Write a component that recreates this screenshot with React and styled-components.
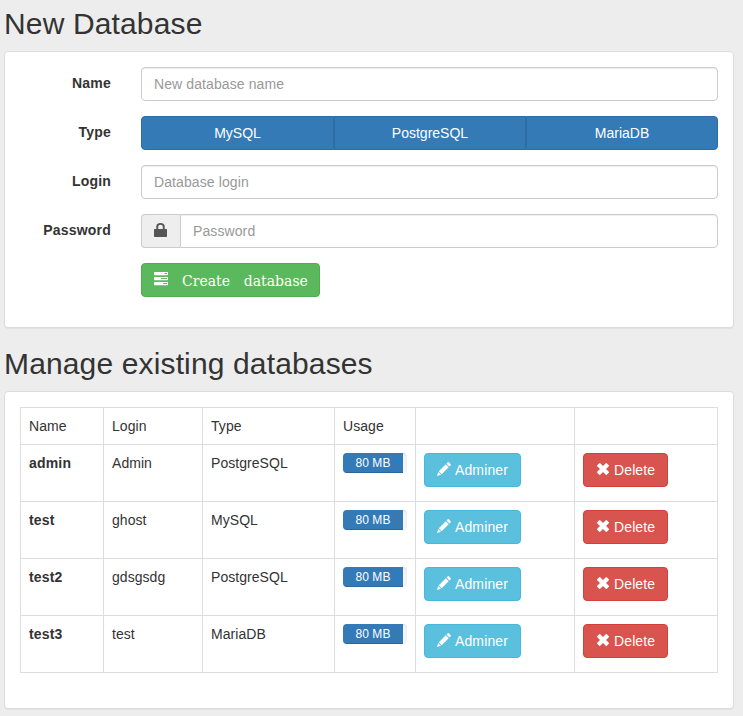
import React from "react";
import styled, { createGlobalStyle, css } from "styled-components";

const GlobalStyle = createGlobalStyle`
  *, *::before, *::after { box-sizing: border-box; }
  html { height: 100%; background: #ededed; }
  body {
    margin: 0;
    background: #ededed;
    color: #333;
    font: 14px/20px "Liberation Sans", Arial, sans-serif;
  }
`;

const Page = styled.main`
  width: 730px;
  margin-left: 4px;
  padding-top: 7px;
`;

const Section = styled.section`
  margin-bottom: 19px;
`;

const Heading = styled.h2`
  margin: 0 0 11px;
  font-size: 30px;
  line-height: 33px;
  font-weight: 400;
  letter-spacing: 0.14px;
`;

const Panel = styled.div`
  padding: 15px;
  background: #fff;
  border: 1px solid #ddd;
  border-radius: 4px;
  box-shadow: 0 1px 1px rgba(0, 0, 0, 0.05);
`;

const Form = styled.form`
  display: grid;
  gap: 15px;
  padding-bottom: 15px;
`;

const FormRow = styled.div`
  display: grid;
  grid-template-columns: 91px 577px;
  column-gap: 30px;
  height: 34px;
`;

const Label = styled.label`
  padding-top: 6px;
  font-weight: 700;
  text-align: right;
  letter-spacing: 0.2px;
`;

const InputGroup = styled.div`
  display: flex;
`;

const Input = styled.input`
  flex: 1;
  min-width: 0;
  height: 34px;
  padding: 6px 12px;
  color: #555;
  font: inherit;
  letter-spacing: 0.1px;
  background: #fff;
  border: 1px solid #ccc;
  border-radius: ${(p) => (p.$joined ? "0 4px 4px 0" : "4px")};
  box-shadow: inset 0 1px 1px rgba(0, 0, 0, 0.075);
  &::placeholder { color: #999; opacity: 1; }
`;

const Addon = styled.span`
  display: flex;
  justify-content: center;
  width: 39px;
  padding-top: 6px;
  color: #555;
  background: #eee;
  border: 1px solid #ccc;
  border-right: 0;
  border-radius: 4px 0 0 4px;
`;

const tones = {
  primary: css`background: #337ab7; border-color: #2e6da4;`,
  success: css`background: #5cb85c; border-color: #4cae4c;`,
  info: css`background: #5bc0de; border-color: #46b8da;`,
  danger: css`background: #d9534f; border-color: #d43f3a;`,
};

const Button = styled.button`
  display: inline-flex;
  align-items: flex-start;
  height: 34px;
  padding: 6px 12px;
  color: #fff;
  font: inherit;
  white-space: nowrap;
  border: 1px solid;
  border-radius: 4px;
  ${(p) => tones[p.$tone]}
`;

const TypeGroup = styled.div`
  display: grid;
  grid-template-columns: 193px 192px 192px;
`;

const TypeButton = styled(Button)`
  justify-content: center;
  border-radius: 0;
  &:first-child { border-radius: 4px 0 0 4px; }
  &:last-child { border-radius: 0 4px 4px 0; }
`;

const CreateButton = styled(Button)`
  grid-column: 2;
  justify-self: start;
  width: 179px;
`;

const CreateText = styled.span`
  margin: 1px 0 0 14px;
  font-family: "DejaVu Serif", serif;
  word-spacing: 9.4px;
`;

const AdminerButton = styled(Button)`
  width: 97px;
`;

const DeleteButton = styled(Button)`
  width: 85px;
`;

const ButtonText = styled.span`
  margin-left: 4px;
  letter-spacing: 0.12px;
`;

const Icon = styled.svg`
  flex: none;
  width: 14px;
  height: 14px;
  margin-top: 2px;
  fill: currentColor;
`;

const Table = styled.table`
  width: 698px;
  margin-bottom: 20px;
  table-layout: fixed;
  border-collapse: collapse;
  border: 1px solid #ddd;
`;

const Column = styled.col`
  width: ${(p) => p.$width}px;
`;

const Cell = styled.td`
  height: ${(p) => (p.$header ? 37 : 57)}px;
  padding: 8px;
  border: 1px solid #ddd;
  line-height: 20px;
  font-weight: ${(p) => (p.$strong ? 700 : 400)};
  letter-spacing: ${(p) => (p.$strong ? 0.18 : 0.05)}px;
  text-align: left;
  vertical-align: top;
`;

const CellContent = styled.div`
  height: 40px;
`;

const Progress = styled.div`
  height: 20px;
  overflow: hidden;
  background: #f5f5f5;
  border-radius: 4px;
  box-shadow: inset 0 1px 2px rgba(0, 0, 0, 0.1);
`;

const ProgressBar = styled.div`
  width: 60px;
  height: 100%;
  color: #fff;
  font-size: 12px;
  line-height: 20px;
  text-align: center;
  background: #337ab7;
  box-shadow: inset 0 -1px 0 rgba(0, 0, 0, 0.15);
`;

const LockIcon = () => (
  <Icon viewBox="0 0 14 14">
    <path fillRule="evenodd" d="M2.3 6V3.6Q2.3 0 6.5 0T10.7 3.6V6h1.6q.7 0 .7.7v6.6q0 .7-.7.7H.7q-.7 0-.7-.7V6.7Q0 6 .7 6zM4.2 6h4.6V3.8Q8.8 1.7 6.5 1.7T4.2 3.8z" />
  </Icon>
);

const ServerIcon = () => (
  <Icon viewBox="0 0 14 14">
    <path fillRule="evenodd" d="M.6 0h12.8q.6 0 .6.6v2q0 .6-.6.6H.6Q0 3.2 0 2.6v-2Q0 0 .6 0zM10.5 1.1v1H13v-1zM.6 5h12.8q.6 0 .6.6v2q0 .6-.6.6H.6Q0 8.2 0 7.6v-2Q0 5 .6 5zM7 6.1v1h6v-1zM.6 10h12.8q.6 0 .6.6v2q0 .6-.6.6H.6q-.6 0-.6-.6v-2q0-.6.6-.6zM9.2 11.1v1H13v-1z" />
  </Icon>
);

const PencilIcon = () => (
  <Icon viewBox="0 0 14 14">
    <path d="M10.8.3q.5-.5 1 0l1.9 1.9q.5.5 0 1l-1.3 1.3-2.9-2.9zM8.8 2.3l2.9 2.9-7 7-2.9-2.9zM1.2 10l2.8 2.8L0 14z" />
  </Icon>
);

const RemoveIcon = () => (
  <Icon viewBox="0 0 14 14">
    <path d="M3.2 1.2q.5-.5 1 0L7 4l2.8-2.8q.5-.5 1 0l2 2q.5.5 0 1L10 7l2.8 2.8q.5.5 0 1l-2 2q-.5.5-1 0L7 10l-2.8 2.8q-.5.5-1 0l-2-2q-.5-.5 0-1L4 7 1.2 4.2q-.5-.5 0-1z" />
  </Icon>
);

const types = ["MySQL", "PostgreSQL", "MariaDB"];
const headers = ["Name", "Login", "Type", "Usage", "", ""];
const columnWidths = [83, 99, 132, 81, 159, 143];
const databases = [
  { name: "admin", login: "Admin", type: "PostgreSQL", usage: "80 MB" },
  { name: "test", login: "ghost", type: "MySQL", usage: "80 MB" },
  { name: "test2", login: "gdsgsdg", type: "PostgreSQL", usage: "80 MB" },
  { name: "test3", login: "test", type: "MariaDB", usage: "80 MB" },
];

function NewDatabase() {
  return (
    <Section>
      <Heading>New Database</Heading>
      <Panel>
        <Form onSubmit={(e) => e.preventDefault()}>
          <FormRow>
            <Label htmlFor="name">Name</Label>
            <Input id="name" placeholder="New database name" />
          </FormRow>
          <FormRow>
            <Label as="span">Type</Label>
            <TypeGroup>
              {types.map((type) => (
                <TypeButton key={type} type="button" $tone="primary">{type}</TypeButton>
              ))}
            </TypeGroup>
          </FormRow>
          <FormRow>
            <Label htmlFor="login">Login</Label>
            <Input id="login" placeholder="Database login" />
          </FormRow>
          <FormRow>
            <Label htmlFor="password">Password</Label>
            <InputGroup>
              <Addon><LockIcon /></Addon>
              <Input id="password" type="password" placeholder="Password" $joined />
            </InputGroup>
          </FormRow>
          <FormRow>
            <CreateButton $tone="success">
              <ServerIcon />
              <CreateText>Create database</CreateText>
            </CreateButton>
          </FormRow>
        </Form>
      </Panel>
    </Section>
  );
}

function ExistingDatabases() {
  return (
    <Section>
      <Heading>Manage existing databases</Heading>
      <Panel>
        <Table>
          <colgroup>
            {columnWidths.map((width, i) => <Column key={i} $width={width} />)}
          </colgroup>
          <thead>
            <tr>
              {headers.map((header, i) => <Cell as="th" key={i} $header>{header}</Cell>)}
            </tr>
          </thead>
          <tbody>
            {databases.map((db) => (
              <tr key={db.name}>
                <Cell $strong>{db.name}</Cell>
                <Cell>{db.login}</Cell>
                <Cell>{db.type}</Cell>
                <Cell>
                  <Progress><ProgressBar>{db.usage}</ProgressBar></Progress>
                </Cell>
                <Cell>
                  <CellContent>
                    <AdminerButton $tone="info"><PencilIcon /><ButtonText>Adminer</ButtonText></AdminerButton>
                  </CellContent>
                </Cell>
                <Cell>
                  <CellContent>
                    <DeleteButton $tone="danger"><RemoveIcon /><ButtonText>Delete</ButtonText></DeleteButton>
                  </CellContent>
                </Cell>
              </tr>
            ))}
          </tbody>
        </Table>
      </Panel>
    </Section>
  );
}

export default function App() {
  return (
    <>
      <GlobalStyle />
      <Page>
        <NewDatabase />
        <ExistingDatabases />
      </Page>
    </>
  );
}
